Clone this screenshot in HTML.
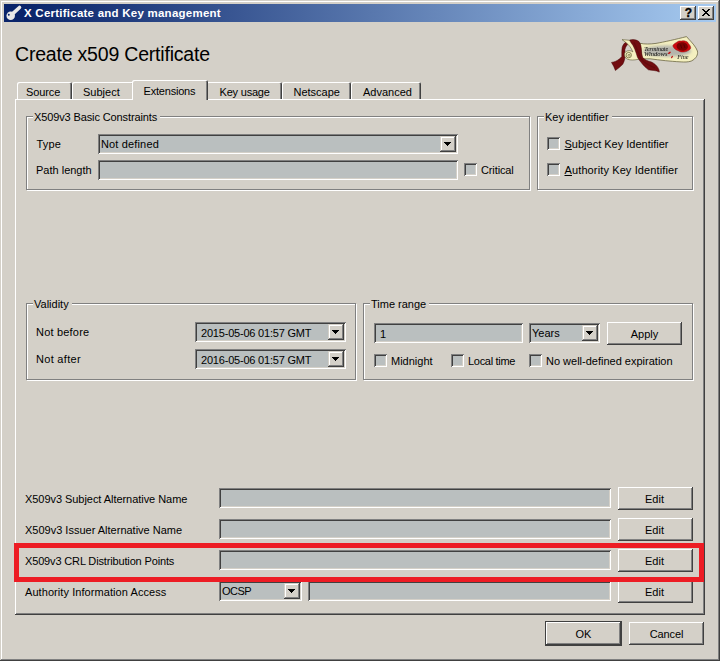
<!DOCTYPE html>
<html><head><meta charset="utf-8"><title>X Certificate and Key management</title>
<style>
*{box-sizing:border-box;margin:0;padding:0}
html,body{width:720px;height:661px;overflow:hidden;background:#d4d0c8}
body{position:relative;font:11px "Liberation Sans",sans-serif;color:#000}
.win *{position:absolute}
.win{position:absolute;left:0;top:0;width:720px;height:661px;background:#d4d0c8;
 box-shadow:inset -1px -1px 0 #404040,inset 1px 1px 0 #d4d0c8,inset -2px -2px 0 #808080,inset 2px 2px 0 #fff}
.title{left:4px;top:4px;width:712px;height:18px;background:linear-gradient(90deg,#0a246a 0%,#0a246a 3%,#a6caf0 100%)}
.title .t{left:20px;top:1px;color:#fff;font:bold 11.5px "Liberation Sans",sans-serif;letter-spacing:0.24px;line-height:17px;white-space:nowrap}
.cb{width:16px;height:14px;top:2px;background:#d4d0c8;
 box-shadow:inset -1px -1px 0 #404040,inset 1px 1px 0 #fff,inset -2px -2px 0 #808080,inset 2px 2px 0 #d4d0c8}
.cb b{left:1px;width:15px;top:0;line-height:13px;text-align:center;font:bold 12px "Liberation Sans",sans-serif;-webkit-text-stroke:.35px #000}
h1{left:15px;top:42.4px;font:19.5px "Liberation Sans",sans-serif;letter-spacing:-0.2px;line-height:24px;white-space:nowrap;font-weight:normal}
.lbl{white-space:nowrap;line-height:14px;height:14px}
.tab{top:82px;height:18px;background:#d4d0c8;border-radius:2px 2px 0 0;
 box-shadow:inset 1px 1px 0 #fff,inset -1px 0 0 #404040,inset -2px 0 0 #808080;}
.tab.sel{top:80px;height:20px;z-index:3}
.tab span{top:3px;line-height:14px;white-space:nowrap;text-align:left}
.pane{left:15px;top:99px;width:690px;height:516px;background:#d4d0c8;
 box-shadow:inset -1px -1px 0 #404040,inset 1px 1px 0 #fff,inset -2px -2px 0 #808080}
.grp{border:1px solid #808080;box-shadow:1px 1px 0 #fff,inset 1px 1px 0 #fff}
.grp .gt{left:6px;top:-7px;background:#d4d0c8;padding:0 3px 0 1px;line-height:14px;white-space:nowrap}
.fld{background:#babfbf;box-shadow:inset 1px 1px 0 #808080,inset -1px -1px 0 #fff,inset 2px 2px 0 #404040,inset -2px -2px 0 #d4d0c8;
 line-height:14px;white-space:nowrap}
.fld .tx{left:4px;top:4px;line-height:14px}
.dd{width:16px;height:16px;right:2px;top:2px;background:#d4d0c8;box-shadow:inset -1px -1px 0 #404040,inset 1px 1px 0 #d4d0c8,inset -2px -2px 0 #808080,inset 2px 2px 0 #fff}
.dd:after{content:"";position:absolute;left:4px;top:6px;width:7px;height:4px;
 background:linear-gradient(#000,#000) 0 0/7px 1px no-repeat,linear-gradient(#000,#000) 1px 1px/5px 1px no-repeat,linear-gradient(#000,#000) 2px 2px/3px 1px no-repeat,linear-gradient(#000,#000) 3px 3px/1px 1px no-repeat}
.chk{width:13px;height:13px;background:#babfbf;box-shadow:inset 1px 1px 0 #808080,inset -1px -1px 0 #fff,inset 2px 2px 0 #404040,inset -2px -2px 0 #d4d0c8}
.btn{width:75px;height:23px;background:#d4d0c8;text-align:center;line-height:24px;
 box-shadow:inset -1px -1px 0 #404040,inset 1px 1px 0 #fff,inset -2px -2px 0 #808080,inset 2px 2px 0 #d4d0c8}
.btn.def{width:77px;height:25px;border:1px solid #404040;box-shadow:inset -1px -1px 0 #404040,inset 1px 1px 0 #fff,inset -2px -2px 0 #808080,inset 2px 2px 0 #d4d0c8}
.btn.def{line-height:24px}
u{position:static!important;text-decoration:underline}
.red{left:14px;top:543px;width:690px;height:39px;border:5px solid #ed1c24;z-index:5}
</style></head><body>
<div class="win">
 <div class="title">
  <svg style="left:0;top:0" width="20" height="18" viewBox="0 0 20 18"><path d="M8.5 9.9 L15.5 3.5" stroke="#e9e9e9" stroke-width="3.6" stroke-linecap="round" fill="none"/><circle cx="6.7" cy="11.7" r="4.25" fill="#e9e9e9"/><circle cx="4.8" cy="10.7" r=".95" fill="#0a246a"/></svg>
  <span class="t">X Certificate and Key management</span>
  <div class="cb" style="left:676px"><b>?</b></div>
  <div class="cb" style="left:694px"><svg style="left:4px;top:3px" width="8" height="7" viewBox="0 0 8 7" shape-rendering="crispEdges"><path d="M0 0h2v1h1v1h2v-1h1v-1h2v1h-1v1h-1v1h-1v1h1v1h1v1h1v1h-2v-1h-1v-1h-2v1h-1v1h-2v-1h1v-1h1v-1h1v-1h-1v-1h-1v-1h-1z" fill="#000"/></svg></div>
 </div>
 <h1>Create x509 Certificate</h1>
 <svg style="left:604px;top:30px" width="100" height="48" viewBox="604 30 100 48">
  <defs>
   <filter id="bl" x="-20%" y="-50%" width="140%" height="200%"><feGaussianBlur stdDeviation="1.6"/></filter>
   <filter id="b2" x="-30%" y="-30%" width="160%" height="160%"><feGaussianBlur stdDeviation=".6"/></filter>
   <clipPath id="pc"><path d="M639.9 43.3C645 44.3 650 44.2 656 43.4C664 42 676 39.3 686.5 36.6L688.9 39.3C692 42.5 696 47 697.4 51C698.2 54.5 696.5 58.5 691.2 61.1C688 62.2 684 62.1 681.1 61.9C675 61.6 670 61.1 665.6 60.7C660 60.1 655 59.4 650 58.8L642.2 58.9Z"/></clipPath>
  </defs>
  <path d="M626.5 41.6C624.5 42.8 622.8 45 622.2 47.2C621.6 50.3 621.9 53.5 621.8 56.6C620.5 58.5 618.2 60 615.8 61.2C614.4 61.8 613 62.2 611.5 62.4C613.2 65 614.5 67.7 615.4 70.5C618 68.6 620.6 66.6 622.8 64.3C623.7 62.6 624.3 60.8 624.7 58.9C625.4 55.8 624.9 52.7 624.9 49.6C625.2 47.9 626 46.3 627.2 44.9L630 41Z" fill="#720c10" stroke="#460507" stroke-width=".5"/>
  <path d="M639.9 43.3C645 44.3 650 44.2 656 43.4C664 42 676 39.3 686.5 36.6L688.9 39.3C692 42.5 696 47 697.4 51C698.2 54.5 696.5 58.5 691.2 61.1C688 62.2 684 62.1 681.1 61.9C675 61.6 670 61.1 665.6 60.7C660 60.1 655 59.4 650 58.8L642.2 58.9Z" fill="#f4f0c0" stroke="#5a5530" stroke-width=".7"/>
  <g clip-path="url(#pc)"><ellipse cx="667" cy="51.2" rx="24" ry="5.6" fill="#b4b4ac" filter="url(#bl)"/></g>
  <path d="M622 39.6L631.3 40.4C634.5 46 637.2 53 639.1 58.9L637.9 59.4C634 60.2 630.5 60.2 628 59.4C624.3 58 623.6 54 625.4 52C627.2 50.2 631 50.2 632.9 51.9C631 47.3 628.6 44.6 625.9 42.5Z" fill="#f4f0c0" stroke="#5a5530" stroke-width=".6"/>
  <circle cx="628.7" cy="55.1" r="2.7" fill="none" stroke="#5a5428" stroke-width=".7"/>
  <circle cx="629" cy="55.3" r="1" fill="none" stroke="#5a5428" stroke-width=".6"/>
  <path d="M629.8 40.1C633 38.9 637 39.8 639 41.6C640.8 44 641.2 47 641.4 49.6C641.6 52.5 641.8 55 642.6 57.3C644.5 60 648 61 651.5 62C654.5 63.5 656.5 65.5 657.8 67.4C658.8 69 659.3 70.5 659.3 72.1C656 70.2 652 70.5 648.4 69.8C645.5 67.5 643.5 65.5 641.4 62.8C639.8 61 638.5 59.2 637.5 57.3C636.8 54.8 635.9 52.2 634.9 49.6C633.9 46.8 632.4 44.3 630.4 41.8Z" fill="#720c10" stroke="#460507" stroke-width=".5"/>
  <path d="M634 42.5C636.5 47 638.5 54 641 58.5C643.5 62.5 649 65.5 655 68" fill="none" stroke="#5c080c" stroke-width="1.2" opacity=".7"/>
  <path d="M672.9 45.6C673.5 43.8 675.8 43 678 41.4C679.5 40.6 680.8 41.2 681.75 41C683.8 40.5 686 41.2 687.6 42.25C688.2 43.8 690.8 45.6 690.7 47.7C690.6 49.4 689.2 50 688 50.6C686.8 51.6 685.2 51.8 683.8 52C681.5 52.4 679.4 51.4 677.6 50.4C676 49.8 674.4 48.9 673.8 47.7C673.2 47 672.8 46.3 672.9 45.6Z" fill="#cf0a0e" stroke="#8a1214" stroke-width=".5"/>
  <path d="M676.6 45.8C676.9 43.2 680 42.2 682.6 42.3C685.6 42.4 688 44.4 687.9 47C687.8 49.4 685 50.8 682.2 50.7C679.2 50.6 676.4 48.6 676.6 45.8Z" fill="#700206" opacity=".88" filter="url(#b2)"/>
  <path d="M680.6 44.6C681.4 45.8 681 47.4 681.8 48.4M683.8 44.4C684.6 45.6 684.4 47.2 685 48" fill="none" stroke="#3c0002" stroke-width=".8" opacity=".8"/>
  <ellipse cx="669.4" cy="52.8" rx="1.6" ry=".8" transform="rotate(-35 669.4 52.8)" fill="#c01014"/>
  <ellipse cx="672" cy="57" rx="1.5" ry=".7" transform="rotate(-60 672 57)" fill="#c01014"/>
  <g font-family="'Liberation Serif',serif" font-style="italic" fill="#000" style="opacity:.99">
   <text x="644.2" y="50.8" font-size="5.4" textLength="24" lengthAdjust="spacingAndGlyphs">Terminate</text>
   <text x="644" y="56.1" font-size="5.4" textLength="23.5" lengthAdjust="spacingAndGlyphs">Windows</text>
   <text x="677.3" y="58.6" font-size="6.2" textLength="11.2" lengthAdjust="spacingAndGlyphs">Fine</text>
  </g>
 </svg>

 <div class="tab" style="left:17px;width:55px"><span style="left:9px;letter-spacing:-.1px">Source</span></div>
 <div class="tab" style="left:72px;width:62px"><span style="left:11px">Subject</span></div>
 <div class="tab" style="left:206px;width:76px"><span style="left:13.5px;letter-spacing:-.2px">Key usage</span></div>
 <div class="tab" style="left:282px;width:69px"><span style="left:11.5px">Netscape</span></div>
 <div class="tab" style="left:351px;width:70px"><span style="left:12px">Advanced</span></div>
 <div class="pane"></div>
 <div class="tab sel" style="left:132px;width:76px"><span style="left:11.5px;top:4px;letter-spacing:-.2px">Extensions</span></div>

 <div class="grp" style="left:26px;top:116px;width:504px;height:74px"><span class="gt" style="left:6px;letter-spacing:-.12px">X509v3 Basic Constraints</span></div>
 <span class="lbl" style="left:36.5px;top:137px;letter-spacing:.15px">Type</span>
 <div class="fld" style="left:98px;top:134px;width:360px;height:20px"><span class="tx" style="left:3px;top:3px;letter-spacing:.15px">Not defined</span><div class="dd"></div></div>
 <span class="lbl" style="left:36px;top:163px">Path length</span>
 <div class="fld" style="left:98px;top:160px;width:360px;height:20px"></div>
 <div class="chk" style="left:464px;top:163px"></div><span class="lbl" style="left:481px;top:163px;letter-spacing:-.12px">Critical</span>

 <div class="grp" style="left:537px;top:116px;width:156px;height:74px"><span class="gt">Key identifier</span></div>
 <div class="chk" style="left:547px;top:137px"></div><span class="lbl" style="left:564.5px;top:137px"><u>S</u>ubject Key Identifier</span>
 <div class="chk" style="left:547px;top:163px"></div><span class="lbl" style="left:564.5px;top:163px;letter-spacing:.12px"><u>A</u>uthority Key Identifier</span>

 <div class="grp" style="left:26px;top:303px;width:330px;height:77px"><span class="gt">Validity</span></div>
 <span class="lbl" style="left:36px;top:325px;letter-spacing:.2px">Not before</span>
 <div class="fld" style="left:195px;top:322px;width:151px;height:20px"><span class="tx" style="left:6px;letter-spacing:-.2px">2015-05-06 01:57 GMT</span><div class="dd"></div></div>
 <span class="lbl" style="left:36px;top:352px;letter-spacing:.3px">Not after</span>
 <div class="fld" style="left:195px;top:349px;width:151px;height:20px"><span class="tx" style="left:6px;letter-spacing:-.2px">2016-05-06 01:57 GMT</span><div class="dd"></div></div>

 <div class="grp" style="left:363px;top:303px;width:330px;height:77px"><span class="gt">Time range</span></div>
 <div class="fld" style="left:374px;top:323px;width:149px;height:20px"><span class="tx" style="left:6px">1</span></div>
 <div class="fld" style="left:529px;top:323px;width:71px;height:20px"><span class="tx" style="left:3px;top:3px">Years</span><div class="dd"></div></div>
 <div class="btn" style="left:607px;top:322px">Apply</div>
 <div class="chk" style="left:374px;top:354px"></div><span class="lbl" style="left:391px;top:354px">Midnight</span>
 <div class="chk" style="left:451px;top:354px"></div><span class="lbl" style="left:468px;top:354px;letter-spacing:-.3px">Local time</span>
 <div class="chk" style="left:529px;top:354px"></div><span class="lbl" style="left:546px;top:354px">No well-defined expiration</span>

 <span class="lbl" style="left:25px;top:492px;letter-spacing:-.05px">X509v3 Subject Alternative Name</span>
 <div class="fld" style="left:219px;top:488px;width:392px;height:20px"></div>
 <div class="btn" style="left:618px;top:487px;padding-right:2px">Edit</div>
 <span class="lbl" style="left:25px;top:523px">X509v3 Issuer Alternative Name</span>
 <div class="fld" style="left:219px;top:519px;width:392px;height:20px"></div>
 <div class="btn" style="left:618px;top:518px;padding-right:2px">Edit</div>
 <span class="lbl" style="left:25px;top:554px;letter-spacing:-.15px">X509v3 CRL Distribution Points</span>
 <div class="fld" style="left:219px;top:550px;width:392px;height:20px"></div>
 <div class="btn" style="left:618px;top:549px;padding-right:2px">Edit</div>
 <span class="lbl" style="left:25px;top:585px;letter-spacing:.07px">Authority Information Access</span>
 <div class="fld" style="left:219px;top:581px;width:83px;height:20px"><span class="tx" style="left:3px;top:3px;letter-spacing:-.5px">OCSP</span><div class="dd"></div></div>
 <div class="fld" style="left:308px;top:581px;width:303px;height:20px"></div>
 <div class="btn" style="left:618px;top:580px;padding-right:2px">Edit</div>
 <div class="red"></div>

 <div class="btn def" style="left:545px;top:621px">OK</div>
 <div class="btn" style="left:629px;top:622px;letter-spacing:-.15px">Cancel</div>
</div>
</body></html>
